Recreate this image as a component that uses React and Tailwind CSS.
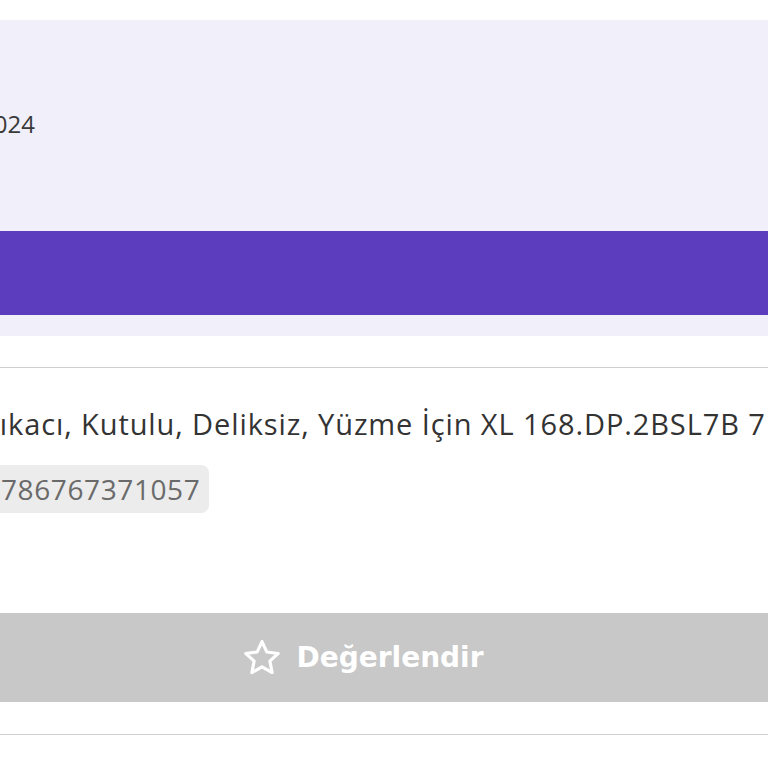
import React from 'react';

function StarOutline() {
  return (
    <svg width="44" height="42" viewBox="0 0 24 24" fill="none" stroke="currentColor" strokeWidth="1.8" strokeLinejoin="round">
      <path d="M12 2.6l2.8 6 6.5.8-4.8 4.4 1.3 6.5L12 17.1l-5.8 3.2 1.3-6.5-4.8-4.4 6.5-.8z" />
    </svg>
  );
}

export default function App() {
  return (
    <div className="w-[768px] h-[768px] overflow-hidden bg-white font-['Open_Sans',sans-serif]">
      <div className="h-[20px]" />

      <div className="bg-[#f1effa] pb-[21px]">
        <div className="h-[211px] flex items-center pb-[3px]">
          <span className="ml-[-20px] text-[24px] text-[#3a3a3a] whitespace-nowrap">2024</span>
        </div>
        <div className="h-[84px] bg-[#5c3dbd]" />
      </div>

      <div className="h-[31px]" />
      <div className="border-t border-[#cfcfcf]">
        <div className="pt-[38px] whitespace-nowrap">
          <p className="ml-[-17px] text-[29px] tracking-[0.9px] leading-[36px] text-[#333]">
            Tıkacı, Kutulu, Deliksiz, Yüzme İçin XL 168.DP.2BSL7B 7
          </p>
          <div className="mt-[23px] flex">
            <span className="ml-[-12px] pl-[13px] pr-[9px] h-[48px] flex items-center rounded-lg bg-[#ececec] text-[28px] tracking-[0.6px] text-[#6a6a6a]">
              786767371057
            </span>
          </div>
        </div>

        <div className="mt-[100px] h-[89px] bg-[#c8c8c8] flex items-center justify-center pr-[44px] gap-[12px] text-white">
          <StarOutline />
          <span className="font-['DejaVu_Sans',sans-serif] font-bold text-[28px]">Değerlendir</span>
        </div>

        <div className="h-[33px] border-b border-[#cfcfcf]" />
      </div>
    </div>
  );
}
